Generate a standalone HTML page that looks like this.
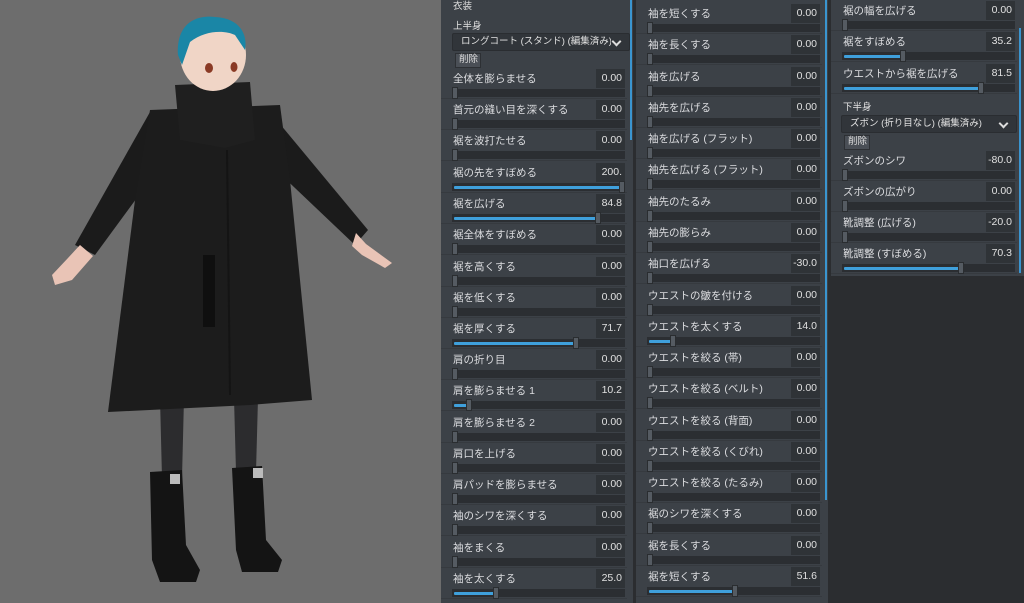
<!DOCTYPE html>
<html><head><meta charset="utf-8"><style>
*{margin:0;padding:0;box-sizing:border-box}
html,body{width:1024px;height:603px;overflow:hidden}
body{background:#2b2d30;position:relative;font-family:"Liberation Sans","Noto Sans CJK JP",sans-serif;color:#d8dadc}
.vp{position:absolute;left:0;top:0;width:441px;height:603px;background:#6d6d6d}
.col{position:absolute;top:0;background:#3c4147;overflow:hidden}
.c1{left:441px;width:192px;height:603px}
.c2{left:636px;width:192px;height:603px}
.c3{left:831px;width:193px;height:276px}
.sb{position:absolute;width:2px;background:#3a95d0}
.row{position:absolute;left:0;width:186px;height:31px;border-bottom:1px solid #363a3f}
.lb{position:absolute;left:12px;top:3px;font-size:10.5px;white-space:nowrap;color:#dcdde0}
.vl{position:absolute;right:2px;top:1px;width:29px;height:19px;background:#2f3337;font-size:10.5px;text-align:right;padding:3px 3px 0 0;color:#e0e0e0}
.tr{position:absolute;left:11px;right:2px;top:21px;height:8px;background:#2b2e32}
.fl{position:absolute;left:2px;top:3px;height:3px;background:#3fa0dc;border-radius:1px}
.th{position:absolute;top:-2px;width:6px;height:12px;background:#555b62;border:1px solid #2a2d30}
.hd{position:absolute;left:12px;font-size:9.5px;line-height:11px;color:#e0e0e0}
.dd{position:absolute;left:8px;width:178px;height:18px;background:#31353a;border:1px solid #2a2d31;border-radius:2px;font-size:9.5px;line-height:14px;padding:1px 0 0 8px;color:#e0e0e0;white-space:nowrap;overflow:hidden}
.dd b{position:absolute;right:6px;top:0;width:12px;height:16px;background:#31353a}
.dd b:after{content:"";position:absolute;left:2px;top:4px;width:5px;height:5px;border-right:2px solid #ddd;border-bottom:2px solid #ddd;transform:rotate(45deg)}
.bt{position:absolute;left:12px;width:26px;height:15px;background:#4a4f56;border:1px solid #2d3034;font-size:9.5px;line-height:12px;padding:0 0 0 3px;color:#ddd}
</style></head><body>
<div class="vp">
<svg width="441" height="603" viewBox="0 0 441 603">
 <polygon points="160,398 184,398 182,478 162,478" fill="#2c2c2e"/>
 <polygon points="234,398 258,398 256,472 236,472" fill="#2c2c2e"/>
 <polygon points="150,472 182,470 186,545 200,570 196,582 160,582 152,560" fill="#141414"/>
 <polygon points="232,468 262,466 266,540 282,560 278,572 242,572 236,550" fill="#141414"/>
 <rect x="170" y="474" width="10" height="10" fill="#bbb"/><rect x="253" y="468" width="10" height="10" fill="#bbb"/>
 <polygon points="150,112 172,150 95,255 75,245" fill="#1b1b1b"/>
 <polygon points="270,112 255,150 355,245 368,230" fill="#1b1b1b"/>
 <polygon points="80,245 93,256 72,280 55,285 52,275 68,258" fill="#e9c4b6"/>
 <polygon points="356,233 366,244 392,263 385,268 362,255 352,246" fill="#e9c4b6"/>
 <polygon points="150,110 280,105 290,180 312,400 250,405 108,412 135,200" fill="#1c1c1c"/>
 <polygon points="175,85 250,82 255,140 225,148 180,140" fill="#1f1f1f"/>
 <line x1="227" y1="150" x2="230" y2="395" stroke="#141414" stroke-width="2"/>
 <rect x="203" y="255" width="12" height="72" fill="#0f0f0f"/>
 <ellipse cx="213" cy="55" rx="33" ry="36" fill="#f0d5c6"/>
 <path d="M178,55 C176,20 200,15 215,17 C240,18 248,35 245,50 L235,35 C225,30 205,30 190,42 L182,65 Z" fill="#1a86a6"/>
 <ellipse cx="209" cy="68" rx="4" ry="5" fill="#8a3a25"/><ellipse cx="234" cy="67" rx="3.5" ry="5" fill="#8a3a25"/>
</svg>
</div>

<div class="col c1">
 <div class="sb" style="left:189px;top:0;height:140px"></div>
 <div class="hd" style="top:1px">衣装</div>
 <div class="hd" style="top:21px">上半身</div>
 <div class="dd" style="top:33px;left:11px;width:178px">ロングコート (スタンド) (編集済み)<b></b></div>
 <div class="bt" style="top:53px;left:14px">削除</div>
 <div class="row" style="top:68px"><span class="lb">全体を膨らませる</span><span class="vl">0.00</span><div class="tr"><div class="th" style="left:0"></div></div></div>
 <div class="row" style="top:99px"><span class="lb">首元の縫い目を深くする</span><span class="vl">0.00</span><div class="tr"><div class="th" style="left:0"></div></div></div>
 <div class="row" style="top:130px"><span class="lb">裾を波打たせる</span><span class="vl">0.00</span><div class="tr"><div class="th" style="left:0"></div></div></div>
 <div class="row" style="top:162px"><span class="lb">裾の先をすぼめる</span><span class="vl">200.</span><div class="tr"><div class="fl" style="width:168px"></div><div class="th" style="left:167px"></div></div></div>
 <div class="row" style="top:193px"><span class="lb">裾を広げる</span><span class="vl">84.8</span><div class="tr"><div class="fl" style="width:143px"></div><div class="th" style="left:143px"></div></div></div>
 <div class="row" style="top:224px"><span class="lb">裾全体をすぼめる</span><span class="vl">0.00</span><div class="tr"><div class="th" style="left:0"></div></div></div>
 <div class="row" style="top:256px"><span class="lb">裾を高くする</span><span class="vl">0.00</span><div class="tr"><div class="th" style="left:0"></div></div></div>
 <div class="row" style="top:287px"><span class="lb">裾を低くする</span><span class="vl">0.00</span><div class="tr"><div class="th" style="left:0"></div></div></div>
 <div class="row" style="top:318px"><span class="lb">裾を厚くする</span><span class="vl">71.7</span><div class="tr"><div class="fl" style="width:121px"></div><div class="th" style="left:121px"></div></div></div>
 <div class="row" style="top:349px"><span class="lb">肩の折り目</span><span class="vl">0.00</span><div class="tr"><div class="th" style="left:0"></div></div></div>
 <div class="row" style="top:380px"><span class="lb">肩を膨らませる 1</span><span class="vl">10.2</span><div class="tr"><div class="fl" style="width:14px"></div><div class="th" style="left:14px"></div></div></div>
 <div class="row" style="top:412px"><span class="lb">肩を膨らませる 2</span><span class="vl">0.00</span><div class="tr"><div class="th" style="left:0"></div></div></div>
 <div class="row" style="top:443px"><span class="lb">肩口を上げる</span><span class="vl">0.00</span><div class="tr"><div class="th" style="left:0"></div></div></div>
 <div class="row" style="top:474px"><span class="lb">肩パッドを膨らませる</span><span class="vl">0.00</span><div class="tr"><div class="th" style="left:0"></div></div></div>
 <div class="row" style="top:505px"><span class="lb">袖のシワを深くする</span><span class="vl">0.00</span><div class="tr"><div class="th" style="left:0"></div></div></div>
 <div class="row" style="top:537px"><span class="lb">袖をまくる</span><span class="vl">0.00</span><div class="tr"><div class="th" style="left:0"></div></div></div>
 <div class="row" style="top:568px"><span class="lb">袖を太くする</span><span class="vl">25.0</span><div class="tr"><div class="fl" style="width:41px"></div><div class="th" style="left:41px"></div></div></div>
</div>

<div class="col c2">
 <div class="sb" style="left:189px;top:0;height:500px"></div>
 <div class="row" style="top:3px"><span class="lb">袖を短くする</span><span class="vl">0.00</span><div class="tr"><div class="th" style="left:0"></div></div></div>
 <div class="row" style="top:34px"><span class="lb">袖を長くする</span><span class="vl">0.00</span><div class="tr"><div class="th" style="left:0"></div></div></div>
 <div class="row" style="top:66px"><span class="lb">袖を広げる</span><span class="vl">0.00</span><div class="tr"><div class="th" style="left:0"></div></div></div>
 <div class="row" style="top:97px"><span class="lb">袖先を広げる</span><span class="vl">0.00</span><div class="tr"><div class="th" style="left:0"></div></div></div>
 <div class="row" style="top:128px"><span class="lb">袖を広げる (フラット)</span><span class="vl">0.00</span><div class="tr"><div class="th" style="left:0"></div></div></div>
 <div class="row" style="top:159px"><span class="lb">袖先を広げる (フラット)</span><span class="vl">0.00</span><div class="tr"><div class="th" style="left:0"></div></div></div>
 <div class="row" style="top:191px"><span class="lb">袖先のたるみ</span><span class="vl">0.00</span><div class="tr"><div class="th" style="left:0"></div></div></div>
 <div class="row" style="top:222px"><span class="lb">袖先の膨らみ</span><span class="vl">0.00</span><div class="tr"><div class="th" style="left:0"></div></div></div>
 <div class="row" style="top:253px"><span class="lb">袖口を広げる</span><span class="vl">-30.0</span><div class="tr"><div class="th" style="left:0"></div></div></div>
 <div class="row" style="top:285px"><span class="lb">ウエストの皺を付ける</span><span class="vl">0.00</span><div class="tr"><div class="th" style="left:0"></div></div></div>
 <div class="row" style="top:316px"><span class="lb">ウエストを太くする</span><span class="vl">14.0</span><div class="tr"><div class="fl" style="width:23px"></div><div class="th" style="left:23px"></div></div></div>
 <div class="row" style="top:347px"><span class="lb">ウエストを絞る (帯)</span><span class="vl">0.00</span><div class="tr"><div class="th" style="left:0"></div></div></div>
 <div class="row" style="top:378px"><span class="lb">ウエストを絞る (ベルト)</span><span class="vl">0.00</span><div class="tr"><div class="th" style="left:0"></div></div></div>
 <div class="row" style="top:410px"><span class="lb">ウエストを絞る (背面)</span><span class="vl">0.00</span><div class="tr"><div class="th" style="left:0"></div></div></div>
 <div class="row" style="top:441px"><span class="lb">ウエストを絞る (くびれ)</span><span class="vl">0.00</span><div class="tr"><div class="th" style="left:0"></div></div></div>
 <div class="row" style="top:472px"><span class="lb">ウエストを絞る (たるみ)</span><span class="vl">0.00</span><div class="tr"><div class="th" style="left:0"></div></div></div>
 <div class="row" style="top:503px"><span class="lb">裾のシワを深くする</span><span class="vl">0.00</span><div class="tr"><div class="th" style="left:0"></div></div></div>
 <div class="row" style="top:535px"><span class="lb">裾を長くする</span><span class="vl">0.00</span><div class="tr"><div class="th" style="left:0"></div></div></div>
 <div class="row" style="top:566px"><span class="lb">裾を短くする</span><span class="vl">51.6</span><div class="tr"><div class="fl" style="width:85px"></div><div class="th" style="left:85px"></div></div></div>
</div>

<div class="col c3">
 <div class="sb" style="left:188px;top:28px;height:245px"></div>
 <div class="row" style="top:0px"><span class="lb">裾の幅を広げる</span><span class="vl">0.00</span><div class="tr"><div class="th" style="left:0"></div></div></div>
 <div class="row" style="top:31px"><span class="lb">裾をすぼめる</span><span class="vl">35.2</span><div class="tr"><div class="fl" style="width:58px"></div><div class="th" style="left:58px"></div></div></div>
 <div class="row" style="top:63px"><span class="lb">ウエストから裾を広げる</span><span class="vl">81.5</span><div class="tr"><div class="fl" style="width:136px"></div><div class="th" style="left:136px"></div></div></div>
 <div class="hd" style="top:102px">下半身</div>
 <div class="dd" style="top:115px;left:10px;width:176px">ズボン (折り目なし) (編集済み)<b></b></div>
 <div class="bt" style="top:135px;left:13px">削除</div>
 <div class="row" style="top:150px"><span class="lb">ズボンのシワ</span><span class="vl">-80.0</span><div class="tr"><div class="th" style="left:0"></div></div></div>
 <div class="row" style="top:181px"><span class="lb">ズボンの広がり</span><span class="vl">0.00</span><div class="tr"><div class="th" style="left:0"></div></div></div>
 <div class="row" style="top:212px"><span class="lb">靴調整 (広げる)</span><span class="vl">-20.0</span><div class="tr"><div class="th" style="left:0"></div></div></div>
 <div class="row" style="top:243px"><span class="lb">靴調整 (すぼめる)</span><span class="vl">70.3</span><div class="tr"><div class="fl" style="width:116px"></div><div class="th" style="left:116px"></div></div></div>
</div>
</body></html>
